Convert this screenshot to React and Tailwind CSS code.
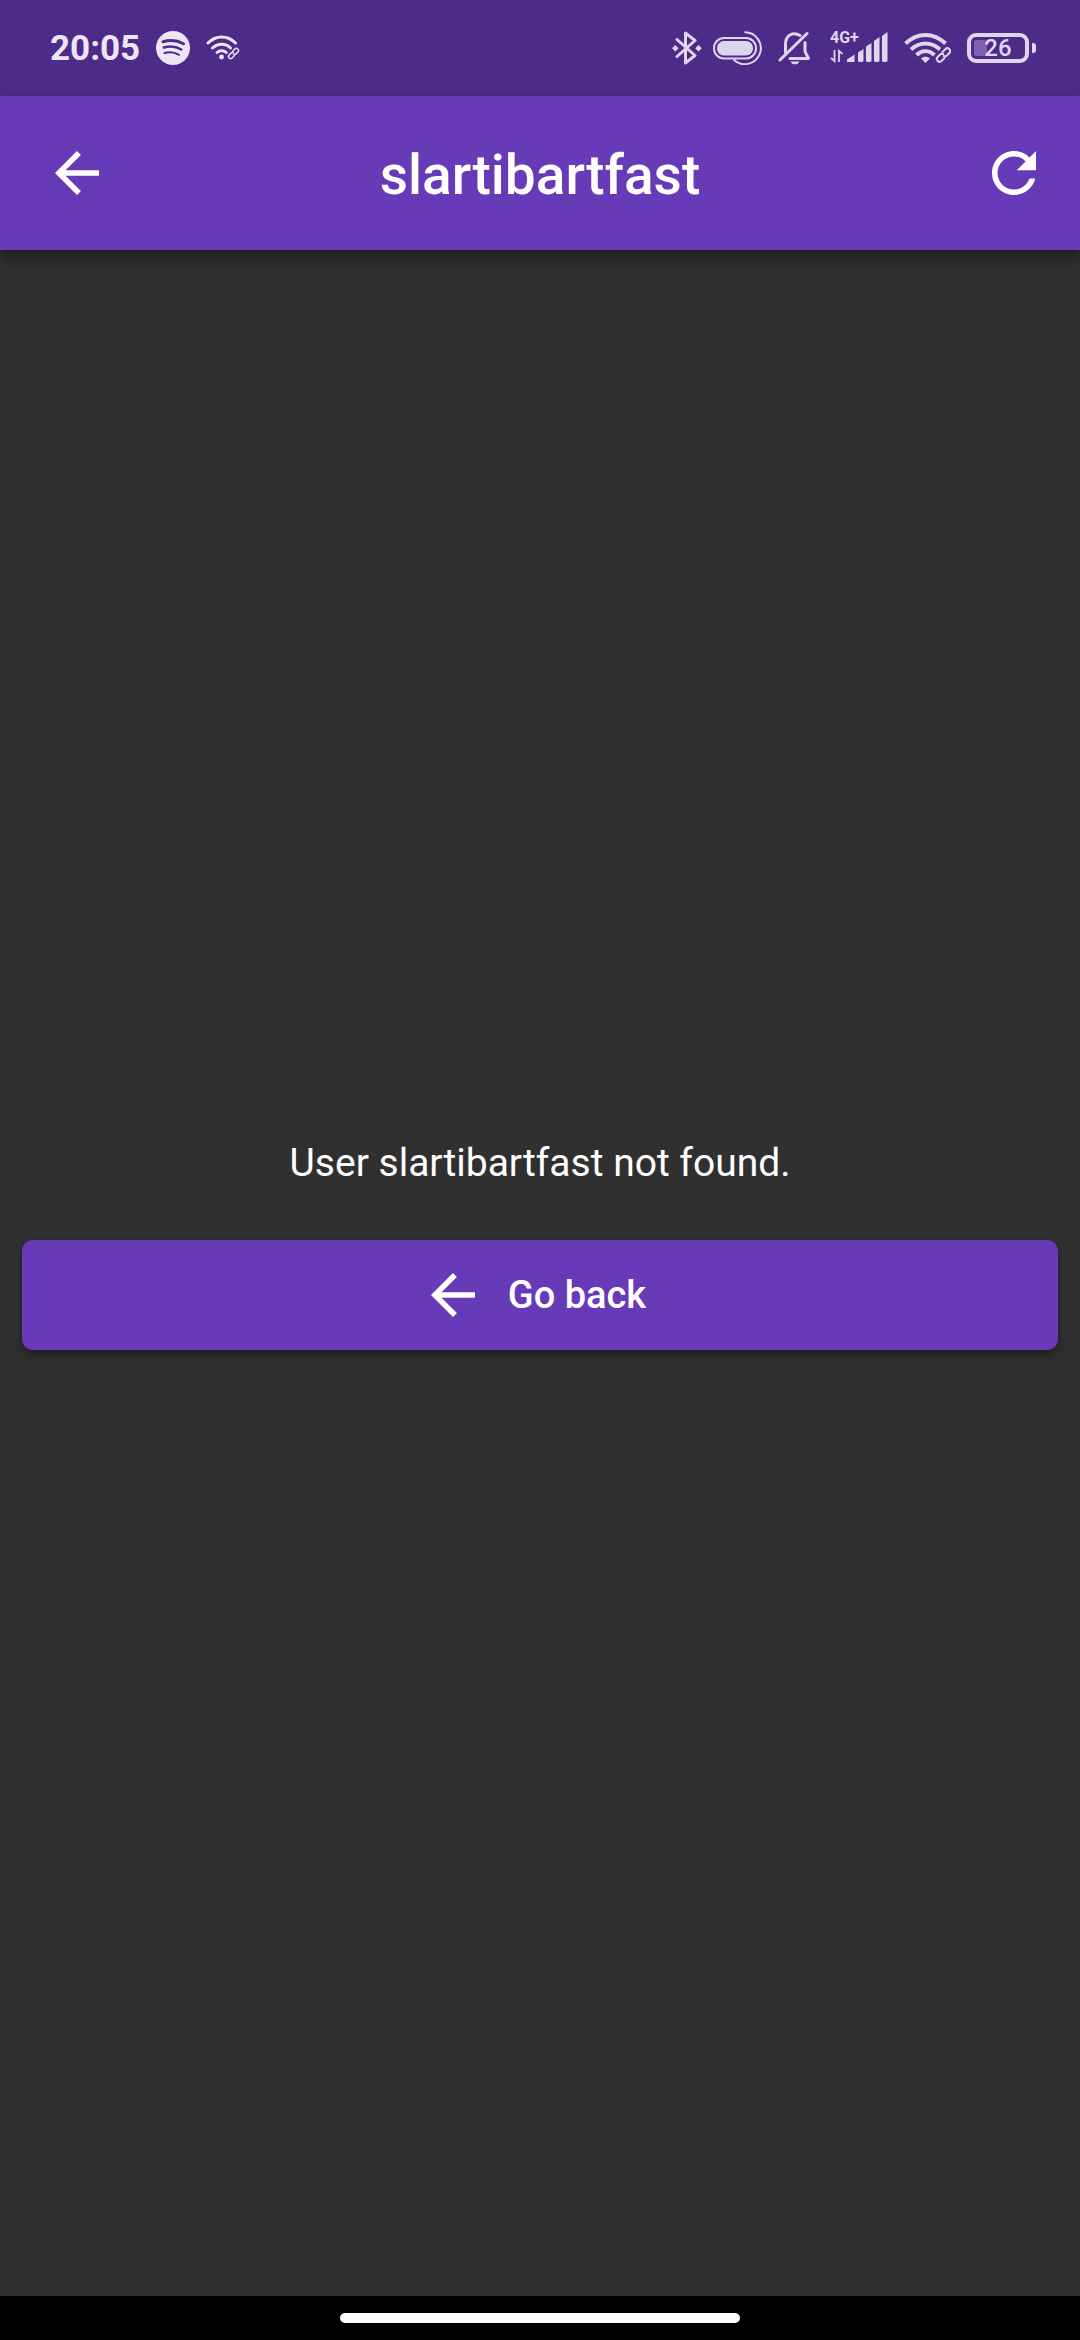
import React from "react";

function ArrowBack() {
  return (
    <svg className="size-[66px] shrink-0" viewBox="0 0 24 24" fill="currentColor" aria-hidden="true">
      <path d="M20 11H7.83l5.59-5.59L12 4l-8 8 8 8 1.41-1.41L7.83 13H20v-2z" />
    </svg>
  );
}

function Refresh() {
  return (
    <svg className="size-[66px] shrink-0" viewBox="0 0 24 24" fill="currentColor" aria-hidden="true">
      <path d="M17.65 6.35C16.2 4.9 14.21 4 12 4c-4.42 0-7.99 3.58-7.99 8s3.57 8 7.99 8c3.73 0 6.84-2.55 7.73-6h-2.08c-.82 2.33-3.04 4-5.65 4-3.31 0-6-2.69-6-6s2.69-6 6-6c1.66 0 3.14.69 4.22 1.78L13 11h7V4l-2.35 2.35z" />
    </svg>
  );
}

function Spotify() {
  return (
    <svg className="h-[34px] w-[34px]" viewBox="0 0 34 34" fill="none" aria-hidden="true">
      <circle cx="17" cy="17" r="17" fill="currentColor" />
      <g stroke="#4d2b88" strokeLinecap="round">
        <path d="M7 10.800c7-2 14.500-1.300 20.500 2" strokeWidth="3" />
        <path d="M7.800 16.500c6-1.700 12.400-1 17.500 2" strokeWidth="2.500" />
        <path d="M8.500 22c5-1.300 10.200-.8 14.500 1.800" strokeWidth="2" />
      </g>
    </svg>
  );
}

function Link({ transform, strokeWidth }) {
  return (
    <g transform={transform} fill="none" stroke="currentColor" strokeWidth={strokeWidth} strokeLinecap="round">
      <path d="M1.500 -2.800H5.500a2.800 2.800 0 0 1 0 5.600H2a2.800 2.800 0 0 1-2.600-2" />
      <path d="M-1.500 2.800H-5.500a2.800 2.800 0 0 1 0-5.600h3.500a2.800 2.800 0 0 1 2.600 2" />
    </g>
  );
}

function WifiSmall() {
  return (
    <svg className="h-[28px] w-[34px]" viewBox="0 0 34 28" fill="none" aria-hidden="true">
      <g stroke="currentColor" strokeWidth="3" strokeLinecap="round">
        <path d="M2 9c8-8 19.500-8 27.500 0" />
        <path d="M6.500 14c5.500-5 13-5 18 0" />
        <path d="M11 18.500c2.800-2.500 6.500-2.500 9.300 0" />
      </g>
      <circle cx="15.500" cy="23" r="2.400" fill="currentColor" />
      <Link transform="translate(27.500 19.500) rotate(-46) scale(.75)" strokeWidth="2" />
    </svg>
  );
}

function Bluetooth() {
  return (
    <svg className="h-[34px] w-[30px]" viewBox="0 0 30 34" fill="none" aria-hidden="true">
      <path d="M5 8.500 23 24.500 13.500 32V2L23 9.500 5 25.500" stroke="currentColor" strokeWidth="3" strokeLinejoin="round" strokeLinecap="round" />
      <path d="M3.300 14 6.600 17.300 3.300 20.600 0 17.300zM26.500 14l3.300 3.300-3.300 3.300-3.300-3.300z" fill="currentColor" />
    </svg>
  );
}

function Device() {
  return (
    <svg className="h-[34px] w-[49px]" viewBox="0 0 49 34" fill="none" stroke="currentColor" strokeWidth="2" aria-hidden="true">
      <rect x="4" y="10" width="36" height="14.500" rx="7" fill="currentColor" stroke="none" />
      <rect x="1" y="7" width="42" height="20.500" rx="10" />
      <path d="M31.500 1.200a16 16 0 1 1-11 27.300" />
    </svg>
  );
}

function BellOff() {
  return (
    <svg className="h-[34px] w-[34px]" viewBox="0 0 34 34" fill="none" stroke="currentColor" strokeWidth="3" strokeLinecap="round" strokeLinejoin="round" aria-hidden="true">
      <path d="M2 29 29 2.500" />
      <path d="M7.500 21.500V13.500C7.500 3.500 15.500.5 22 4.500" />
      <path d="M27 11.500v9L30.500 27.500H12" />
      <path d="M12.500 30.500h9c-1 2-2.500 2.800-4.500 2.800s-3.500-.8-4.500-2.800z" fill="currentColor" stroke="none" />
    </svg>
  );
}

function Signal() {
  return (
    <div className="grid h-[34px] w-[58px]">
      <span className="col-start-1 row-start-1 self-start text-[16px] leading-[14px] font-bold">4G+</span>
      <svg className="col-start-1 row-start-1 h-[34px] w-[58px]" viewBox="0 0 58 34" fill="none" aria-hidden="true">
        <path d="M4.500 19v11L1 27M9 31V20l3.500 3" stroke="currentColor" strokeWidth="1.800" />
        <g fill="currentColor">
          <path d="M17 31v-2.500l7.500-5V31zM28 21.500l5.500-3.500v12l-1 1h-3.500l-1-1zM36 15.500l5.500-3.500v18l-1 1h-3.500l-1-1zM44 10l5.500-4V30l-1 1h-3.500l-1-1zM52 5l5.500-4V30l-1 1h-3.500l-1-1z" />
        </g>
      </svg>
    </div>
  );
}

function Wifi() {
  return (
    <svg className="h-[32px] w-[47px]" viewBox="0 0 47 32" fill="none" aria-hidden="true">
      <g stroke="currentColor" strokeWidth="4">
        <path d="M1.500 11.500c12-11.500 28-11.500 40 0" />
        <path d="M7 17.500c8.800-8 20.200-8 29 0" />
        <path d="M12.500 23c5.500-5 12.500-5 18 0" />
      </g>
      <path d="M17 26.500c2.800-2.500 6.200-2.500 9 0l-4.500 4.500z" fill="currentColor" />
      <Link transform="translate(39.500 23) rotate(-46)" strokeWidth="2" />
    </svg>
  );
}

function Battery() {
  return (
    <div className="flex items-center gap-[3px]">
      <div className="grid h-[30px] w-[62px] items-center rounded-[9px] border-4 border-current">
        <span className="col-start-1 row-start-1 ml-[3px] h-4 w-[13px] rounded-[3px] bg-[#7e60ad]" />
        <span className="col-start-1 row-start-1 text-center text-[24px] leading-[22px] font-medium">26</span>
      </div>
      <span className="h-[10px] w-[4px] rounded-r-[3px] bg-current" />
    </div>
  );
}

export default function App() {
  return (
    <div className="flex min-h-screen flex-col bg-[#303030] font-['Roboto',sans-serif] text-white">
      <div className="flex h-24 shrink-0 items-center justify-between bg-[#4d2b88] pr-[44px] pl-[50px]">
        <div className="flex items-center gap-4 text-[#ece6f4]">
          <span className="pt-[2px] text-[35px] leading-[40px] font-bold">20:05</span>
          <Spotify />
          <WifiSmall />
        </div>
        <div className="flex items-center gap-4 text-[#dfd6ec]">
          <div className="flex items-center gap-[11px]">
            <Bluetooth />
            <Device />
          </div>
          <BellOff />
          <div className="flex items-center gap-4 pl-[2px]">
            <Signal />
            <Wifi />
            <Battery />
          </div>
        </div>
      </div>

      <header className="grid h-[154px] shrink-0 grid-cols-[1fr_auto_1fr] items-center bg-[#673ab7] pr-[33px] pl-[44px] shadow-[0_8px_14px_rgba(0,0,0,0.4)]">
        <button type="button" aria-label="Back" className="justify-self-start">
          <ArrowBack />
        </button>
        <h1 className="pt-1 pr-[11px] text-[55px] leading-[64px] font-medium">slartibartfast</h1>
        <button type="button" aria-label="Refresh" className="justify-self-end">
          <Refresh />
        </button>
      </header>

      <main className="flex grow flex-col justify-center px-[22px]">
        <p className="text-center text-[39px] leading-[44px]">User slartibartfast not found.</p>
        <button
          type="button"
          className="my-[55px] flex h-[110px] items-center justify-center gap-[22px] rounded-[11px] bg-[#673ab7] pr-[14px] text-[38px] leading-[44px] font-medium shadow-[0_4px_8px_rgba(0,0,0,0.4)]"
        >
          <ArrowBack />
          <span>Go back</span>
        </button>
      </main>

      <footer className="flex h-[44px] shrink-0 items-center justify-center bg-black">
        <div className="h-[10px] w-[37%] rounded-full bg-white" />
      </footer>
    </div>
  );
}
